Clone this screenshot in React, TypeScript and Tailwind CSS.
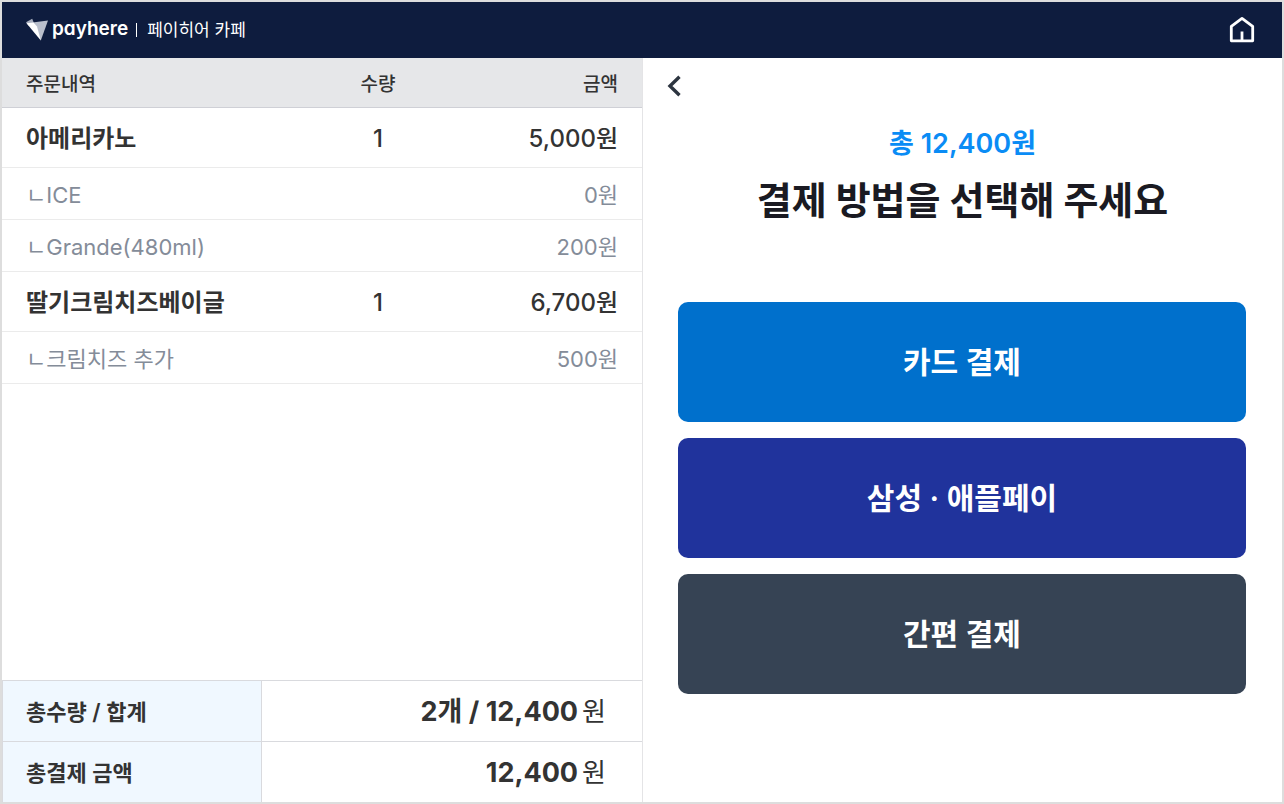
import clsx from 'clsx'

type OrderRow = {
  name: string
  price: string
  qty?: number
}

// rows without a qty are options of the item above them
const ORDER_ROWS: OrderRow[] = [
  { name: '아메리카노', qty: 1, price: '5,000원' },
  { name: 'ICE', price: '0원' },
  { name: 'Grande(480ml)', price: '200원' },
  { name: '딸기크림치즈베이글', qty: 1, price: '6,700원' },
  { name: '크림치즈 추가', price: '500원' },
]

const TOTALS = [
  { label: '총수량 / 합계', value: '2개 / 12,400' },
  { label: '총결제 금액', value: '12,400' },
]

const METHODS = [
  { label: '카드 결제', color: 'bg-[#0070cc]' },
  { label: '삼성 · 애플페이', color: 'bg-[#20339c]' },
  { label: '간편 결제', color: 'bg-[#364354]' },
]

function Header() {
  return (
    <header className="flex h-14 items-center justify-between bg-[#0e1c3e] px-6 text-white">
      <div className="flex items-center">
        <svg className="mr-1 h-6 w-[22px]" viewBox="0 0 22 24" aria-hidden="true">
          <path d="M6.5 4.5 22 2.5 14.8 22.5Z" fill="#b9bfcc" />
          <path d="M0 4.2 6.2 .8 8.5 6.5 2.5 7.5Z" fill="#a9b0c0" />
          <path d="M.5 5.2 7.5 4.6 11 8.5 14.8 22.5Z" fill="#ffffff" />
        </svg>
        <span className="pb-0.5 text-[19px] leading-6 font-semibold [font-feature-settings:'cv11']">payhere</span>
        <span className="mr-2.5 ml-2 h-3.5 w-px bg-white" />
        <span className="text-[17px] leading-6">페이히어 카페</span>
      </div>
      <button type="button" aria-label="홈" className="-mr-1 flex size-10 items-center justify-center">
        <svg className="size-7" viewBox="0 0 28 28" fill="none" stroke="currentColor" strokeWidth="2.8" aria-hidden="true">
          <path d="M3.3 10.4 14 2.4 24.7 10.4V24.8H3.3Z" strokeLinejoin="round" />
          <path d="M14 15.5V24.8" />
        </svg>
      </button>
    </header>
  )
}

function OrderTable() {
  return (
    <table className="w-full table-fixed border-separate border-spacing-0 text-[#333]">
      <thead>
        <tr className="bg-[#e6e7e9] text-[19px] leading-7">
          <th className="h-[50px] border-b border-[#cfd0d6] pt-1 pl-6 text-left font-medium">주문내역</th>
          <th className="w-24 border-b border-[#cfd0d6] pt-1 text-center font-medium">수량</th>
          <th className="w-54 border-b border-[#cfd0d6] pt-1 pr-6 text-right font-medium">금액</th>
        </tr>
      </thead>
      <tbody>
        {ORDER_ROWS.map((row) => {
          const cell = clsx(
            'border-b border-[#ebebeb] pt-0.5',
            row.qty ? 'h-15 text-2xl font-medium' : 'h-13 text-[22px] leading-8 text-[#848c99]',
          )
          return (
            <tr key={row.name}>
              <td className={clsx(cell, 'pl-6', row.qty && 'font-semibold')}>
                {row.qty ? row.name : `ㄴ${row.name}`}
              </td>
              <td className={clsx(cell, 'text-center')}>{row.qty}</td>
              <td className={clsx(cell, 'pr-6 text-right')}>{row.price}</td>
            </tr>
          )
        })}
      </tbody>
    </table>
  )
}

function Totals() {
  return (
    <table className="w-full table-fixed border-separate border-spacing-0 text-[#333]">
      <tbody>
        {TOTALS.map((row) => (
          <tr key={row.label}>
            <th
              scope="row"
              className="h-[61px] w-65 border-x border-t border-[#d9dade] bg-[#f0f8ff] pt-0.5 pl-[23px] text-left text-[22px] leading-8 font-semibold"
            >
              {row.label}
            </th>
            <td className="border-t border-[#d9dade] pt-0.5 pr-9 text-right text-[27px] leading-8 font-bold">
              {row.value}
              <span className="ml-1 text-[26px] font-normal">원</span>
            </td>
          </tr>
        ))}
      </tbody>
    </table>
  )
}

function Payment() {
  return (
    <main className="flex flex-1 flex-col border-l border-[#e4e4e6]">
      <button type="button" aria-label="뒤로" className="ml-3 flex h-14 w-10 items-center justify-center text-[#2d3540]">
        <svg className="size-6" viewBox="0 0 24 24" fill="none" stroke="currentColor" strokeWidth="3.4" aria-hidden="true">
          <path d="M16.5 2.8 7 12 16.5 21.2" />
        </svg>
      </button>
      <div className="mt-2.5 text-center">
        <p className="text-[27px] leading-10 font-semibold text-[#0a8cf5]">총 12,400원</p>
        <h1 className="mt-1.5 text-[38px] leading-15 font-bold text-[#1a1a22]">결제 방법을 선택해 주세요</h1>
      </div>
      <div className="mt-18 flex flex-col gap-4 pr-9 pl-[35px]">
        {METHODS.map((method) => (
          <button
            key={method.label}
            type="button"
            className={clsx('h-30 rounded-[10px] text-3xl font-semibold text-white', method.color)}
          >
            {method.label}
          </button>
        ))}
      </div>
    </main>
  )
}

export default function App() {
  return (
    <div className="flex min-h-screen flex-col border-2 border-[#dddddd] bg-white font-['Inter','Noto_Sans_CJK_KR',sans-serif]">
      <Header />
      <div className="flex flex-1">
        <section className="flex w-1/2 flex-col justify-between">
          <OrderTable />
          <Totals />
        </section>
        <Payment />
      </div>
    </div>
  )
}
